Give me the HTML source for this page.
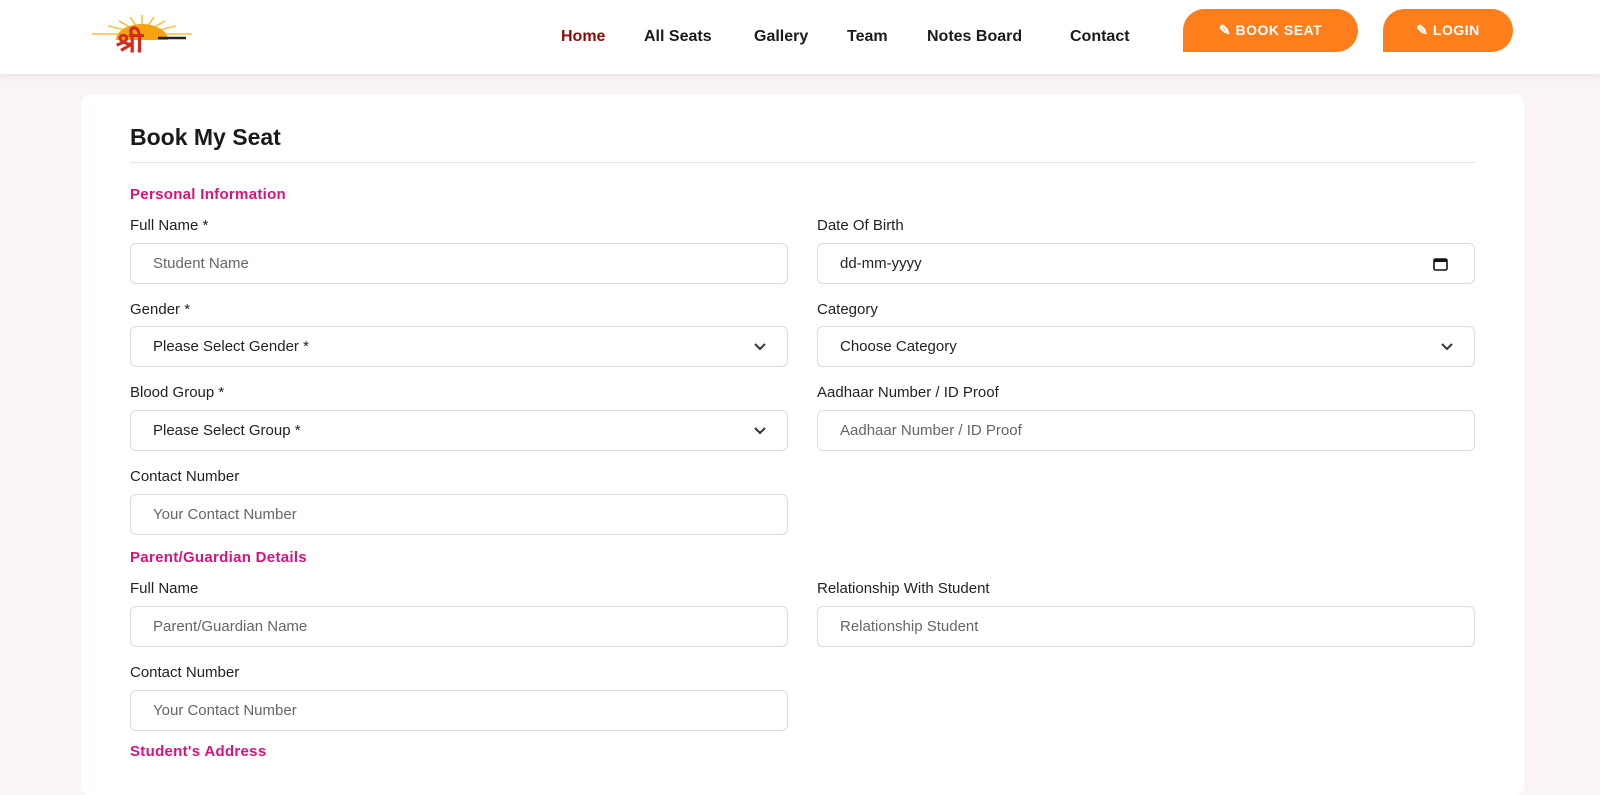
<!DOCTYPE html>
<html><head><meta charset="utf-8"><style>
*{box-sizing:border-box;margin:0;padding:0}
body{width:1600px;height:766px;overflow:hidden;background:#faf4f8;font-family:"Liberation Sans",Arial,sans-serif;position:relative;color:#222}
.hdr{position:absolute;left:0;top:0;width:1600px;height:74px;background:#fff;box-shadow:0 2px 8px rgba(0,0,0,.08)}
.nav{position:absolute;top:28px;font-size:16px;font-weight:bold;color:#1b1b1b}
.btn{position:absolute;top:9px;height:43px;background:#fd7e1b;color:#fff;font-weight:bold;font-size:14px;letter-spacing:.5px;border-radius:22px 22px 22px 0;display:flex;align-items:center;justify-content:center;gap:6px}
.card{position:absolute;left:81px;top:95px;width:1443px;height:700px;background:#fff;border-radius:8px}
.a{position:absolute}
h1{position:absolute;left:130px;top:124px;font-size:23px;font-weight:bold;color:#1a1a1a}
.hr{position:absolute;left:130px;top:162px;width:1345px;height:1px;background:#e6e6e6}
.sec{position:absolute;left:130px;font-size:15px;font-weight:bold;color:#d6137a;letter-spacing:.3px}
.lb{position:absolute;font-size:15px;color:#222}
.in{position:absolute;width:658px;height:41px;border:1px solid #dcdcdc;border-radius:6px;padding-left:22px;display:flex;align-items:center;font-size:15px;color:#666}
.in.d{color:#222}
.chev{position:absolute;right:20px;top:14px}
</style></head><body>
<div class="hdr">
<svg class="a" style="left:86px;top:12px" width="112" height="42" viewBox="0 0 112 42">
<g stroke="#f7c23f" stroke-width="1.6">
<line x1="56" y1="22" x2="56" y2="3"/><line x1="56" y1="22" x2="44" y2="5"/><line x1="56" y1="22" x2="68" y2="5"/>
<line x1="56" y1="22" x2="33" y2="9"/><line x1="56" y1="22" x2="79" y2="9"/><line x1="56" y1="22" x2="22" y2="14"/>
<line x1="56" y1="22" x2="90" y2="14"/><line x1="56" y1="22" x2="6" y2="22"/><line x1="56" y1="22" x2="106" y2="22"/>
</g>
<path d="M30 28 A26 16 0 0 1 82 28 Z" fill="#f6a312"/>
<text x="30" y="40" font-size="28" font-weight="bold" fill="#d42a1d" font-family="Noto Sans CJK SC,sans-serif">श्री</text>
<line x1="72" y1="26" x2="100" y2="26" stroke="#222" stroke-width="2.5"/>
</svg>
<div class="nav" style="left:561px;color:#8b0a0a">Home</div>
<div class="nav" style="left:644px">All Seats</div>
<div class="nav" style="left:754px">Gallery</div>
<div class="nav" style="left:847px">Team</div>
<div class="nav" style="left:927px">Notes Board</div>
<div class="nav" style="left:1070px">Contact</div>
<div class="btn" style="left:1183px;width:175px">✎ BOOK SEAT</div>
<div class="btn" style="left:1383px;width:130px">✎ LOGIN</div>
</div>
<div class="card"></div>
<h1>Book My Seat</h1>
<div class="hr"></div>
<div class="sec" style="top:186px">Personal Information</div>
<div class="lb" style="left:130px;top:217px">Full Name *</div>
<div class="lb" style="left:817px;top:217px">Date Of Birth</div>
<div class="in" style="left:130px;top:243px">Student Name</div>
<div class="in d" style="left:817px;top:243px">dd-mm-yyyy<svg class="chev" style="top:13px;right:26px" width="15" height="14" viewBox="0 0 15 14"><rect x="1" y="2" width="13" height="11" rx="1.5" fill="none" stroke="#111" stroke-width="1.6"/><rect x="1" y="2" width="13" height="3" fill="#111"/></svg></div>
<div class="lb" style="left:130px;top:301px">Gender *</div>
<div class="lb" style="left:817px;top:301px">Category</div>
<div class="in d" style="left:130px;top:326px">Please Select Gender *<svg class="chev" width="14" height="10" viewBox="0 0 14 10"><path d="M2 3l5 5 5-5" fill="none" stroke="#333" stroke-width="2"/></svg></div>
<div class="in d" style="left:817px;top:326px">Choose Category<svg class="chev" width="14" height="10" viewBox="0 0 14 10"><path d="M2 3l5 5 5-5" fill="none" stroke="#333" stroke-width="2"/></svg></div>
<div class="lb" style="left:130px;top:384px">Blood Group *</div>
<div class="lb" style="left:817px;top:384px">Aadhaar Number / ID Proof</div>
<div class="in d" style="left:130px;top:410px">Please Select Group *<svg class="chev" width="14" height="10" viewBox="0 0 14 10"><path d="M2 3l5 5 5-5" fill="none" stroke="#333" stroke-width="2"/></svg></div>
<div class="in" style="left:817px;top:410px">Aadhaar Number / ID Proof</div>
<div class="lb" style="left:130px;top:468px">Contact Number</div>
<div class="in" style="left:130px;top:494px">Your Contact Number</div>
<div class="sec" style="top:549px">Parent/Guardian Details</div>
<div class="lb" style="left:130px;top:580px">Full Name</div>
<div class="lb" style="left:817px;top:580px">Relationship With Student</div>
<div class="in" style="left:130px;top:606px">Parent/Guardian Name</div>
<div class="in" style="left:817px;top:606px">Relationship Student</div>
<div class="lb" style="left:130px;top:664px">Contact Number</div>
<div class="in" style="left:130px;top:690px">Your Contact Number</div>
<div class="sec" style="top:743px">Student's Address</div>
</body></html>
